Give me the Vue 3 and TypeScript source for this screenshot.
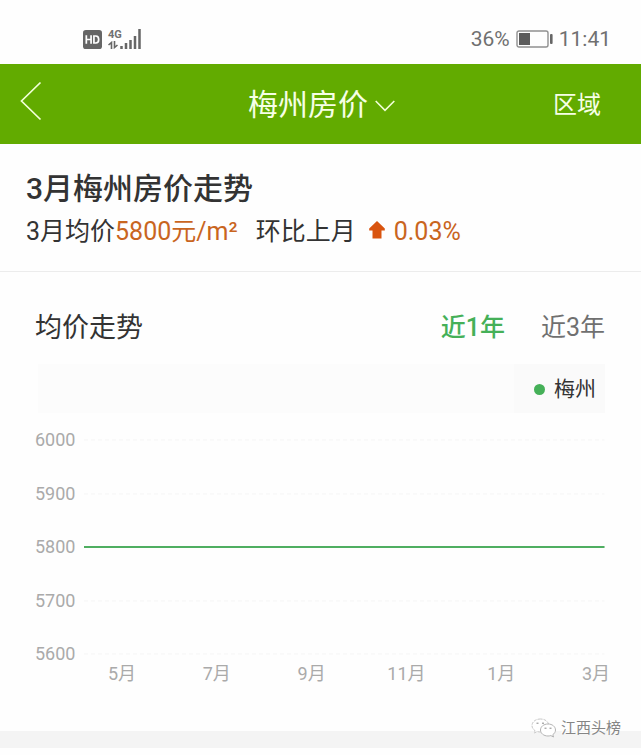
<script setup lang="ts">
import { computed, ref } from 'vue'

interface Range {
  id: number
  label: string
}

const ranges: Range[] = [
  { id: 1, label: '近1年' },
  { id: 3, label: '近3年' },
]
const activeRange = ref<number>(1)

const ticks: number[] = [6000, 5900, 5800, 5700, 5600]
const months: string[] = ['5月', '7月', '9月', '11月', '1月', '3月']
const prices: number[] = Array.from({ length: 12 }, () => 5800)

const plotWidth = 522
const plotHeight = 214

const toY = (value: number): number => {
  const top = ticks[0]
  const bottom = ticks[ticks.length - 1]
  return Math.round(((top - value) / (top - bottom)) * plotHeight)
}

const linePoints = computed<string>(() =>
  prices
    .map((p, i) => `${(i * plotWidth) / (prices.length - 1)},${toY(p)}`)
    .join(' '),
)
</script>

<template>
  <div class="page">
    <div class="status">
      <div class="network-side">
        <svg class="hd" viewBox="0 0 20 20" aria-hidden="true">
          <rect x="0" y="0" width="20" height="20" rx="3" fill="#666" />
          <path
            d="M3.5 5.5v9M8.5 5.5v9M3.5 10h5M11.5 6.3v7.4h2q3 0 3-3.7t-3-3.7z"
            fill="none" stroke="#fff" stroke-width="1.8"
          />
        </svg>
        <div class="network">
          <span class="net-type">4G</span>
          <svg class="updown" viewBox="0 0 10 8" aria-hidden="true">
            <path d="M3.5 8V1.500L0.500 4M6.500 0v6.500l3-2.500" fill="none" stroke="#666" stroke-width="1.600" />
          </svg>
        </div>
        <svg class="signal" viewBox="0 0 21 20" aria-hidden="true">
          <path
            d="M1.500 20v-3M6 20v-6M10.500 20v-9M15 20v-13M19.500 20V0"
            fill="none" stroke="#666" stroke-width="2.500"
          />
        </svg>
      </div>
      <div class="power-side">
        <span>36%</span>
        <svg class="battery" viewBox="0 0 37 18" aria-hidden="true">
          <rect x="1" y="1" width="31" height="16" rx="2" fill="none" stroke="#909090" stroke-width="1.4" />
          <rect x="3" y="3" width="11" height="12" fill="#5c5c5c" />
          <rect x="34" y="4" width="2.6" height="10" rx="1" fill="#666" />
        </svg>
        <span>11:41</span>
      </div>
    </div>

    <header class="nav">
      <button class="nav-back" type="button" aria-label="返回">
        <svg viewBox="0 0 22 40" aria-hidden="true">
          <path d="M20.5 1.5L1.5 20l19 18.5" fill="none" stroke="#f2ffd8" stroke-width="1.7" />
        </svg>
      </button>
      <button class="nav-city" type="button">
        <span>梅州房价</span>
        <svg viewBox="0 0 20 12" aria-hidden="true">
          <path d="M0.7 1l9.3 9.3L19.3 1" fill="none" stroke="#f2ffd8" stroke-width="1.6" />
        </svg>
      </button>
      <button class="nav-area" type="button">区域</button>
    </header>

    <section class="summary">
      <h1>3月梅州房价走势</h1>
      <p>
        <span>3月均价<span class="accent">5800元/m²</span></span>
        <span class="compare">环比上月</span>
        <svg class="rise" viewBox="0 0 16 18" aria-hidden="true">
          <path d="M8 0L15.800 7.500V9.500H12.500V17.500H3.500V9.500H0.200V7.500z" fill="#d9540f" />
        </svg>
        <span class="accent">0.03%</span>
      </p>
    </section>

    <section class="trend">
      <div class="trend-head">
        <h2>均价走势</h2>
        <div class="ranges">
          <button
            v-for="range in ranges"
            :key="range.id"
            type="button"
            :class="['range', { active: range.id === activeRange }]"
            :aria-pressed="range.id === activeRange"
            @click="activeRange = range.id"
          >{{ range.label }}</button>
        </div>
      </div>

      <div class="legend">
        <div class="legend-item"><i class="dot"></i>梅州</div>
      </div>

      <div class="chart">
        <div class="y-axis">
          <span v-for="tick in ticks" :key="tick">{{ tick }}</span>
        </div>
        <svg class="plot" :viewBox="`0 0 ${plotWidth} ${plotHeight}`" preserveAspectRatio="none" aria-hidden="true">
          <line
            v-for="tick in ticks"
            :key="tick"
            class="grid-line"
            x1="0" :x2="plotWidth" :y1="toY(tick)" :y2="toY(tick)"
          />
          <polyline class="price-line" :points="linePoints" />
        </svg>
      </div>
      <div class="x-axis">
        <span v-for="month in months" :key="month">{{ month }}</span>
      </div>
    </section>

    <div class="divider"></div>

    <div class="watermark">
      <svg viewBox="0 0 26 20" aria-hidden="true">
        <path
          d="M9.500 1C4.500 1 1 4 1 7.500c0 2.200 1.200 3.900 3 5.100L3.300 15l2.900-1.500c1 .3 2.200.5 3.300.5M17.500 6C16.500 3 13.500 1 9.500 1"
          fill="#fff" stroke="#b8b8b8" stroke-width="0.800" stroke-dasharray="3 1"
        />
        <path
          d="M17 6c-4.300 0-7.500 2.700-7.500 6s3.200 6 7.500 6c1 0 2-.2 2.900-.4l2.600 1.400-.7-2.300c1.600-1.100 2.700-2.800 2.700-4.700 0-3.300-3.200-6-7.500-6z"
          fill="#fff" stroke="#aaa" stroke-width="0.900"
        />
        <path d="M5.500 5.200h2M11 5.200h2M13.500 10.200h2M18.500 10.200h2" stroke="#888" stroke-width="1" />
      </svg>
      <span>江西头榜</span>
    </div>
  </div>
</template>

<style>
body {
  margin: 0;
  background: #fefefe;
}
</style>

<style scoped>
.page {
  position: relative;
  font-family: Roboto, "Noto Sans CJK SC", sans-serif;
  color: #333;
  background: #fefefe;
}
button {
  margin: 0;
  padding: 0;
  border: 0;
  background: none;
  font: inherit;
  color: inherit;
  cursor: pointer;
}
svg {
  display: block;
  flex: none;
}
h1,
h2,
p {
  margin: 0;
}
.status {
  display: flex;
  justify-content: space-between;
  align-items: center;
  height: 64px;
  padding: 14px 30px 0 83px;
  box-sizing: border-box;
  font-size: 21px;
  line-height: 26px;
  color: #707070;
}
.network-side,
.power-side {
  display: flex;
  align-items: center;
  gap: 6px;
}
.hd {
  width: 19px;
  height: 19px;
}
.network {
  display: flex;
  flex-direction: column;
  align-items: flex-start;
  gap: 1px;
}
.net-type {
  font-size: 11px;
  line-height: 11px;
  font-weight: 700;
}
.updown {
  width: 10px;
  height: 8px;
}
.signal {
  width: 21px;
  height: 20px;
  margin-left: -8px;
}
.battery {
  width: 37px;
  height: 18px;
}
.nav {
  display: grid;
  grid-template-columns: 1fr auto 1fr;
  align-items: center;
  height: 80px;
  padding: 0 40px 0 20px;
  box-sizing: border-box;
  background: #62ab00;
  color: #f6ffe6;
}
.nav-back {
  justify-self: start;
  padding-bottom: 6px;
}
.nav-back svg {
  width: 22px;
  height: 40px;
}
.nav-city {
  display: flex;
  align-items: center;
  gap: 7px;
  margin-left: 22px;
  padding-top: 2px;
  font-size: 30px;
  line-height: 40px;
}
.nav-city svg {
  width: 20px;
  height: 12px;
  margin-top: 2px;
}
.nav-area {
  justify-self: end;
  padding-top: 2px;
  font-size: 24px;
  line-height: 40px;
}
.summary {
  padding: 25px 26px 19px;
  border-bottom: 1px solid #ececec;
}
.summary h1 {
  font-size: 30px;
  line-height: 40px;
  font-weight: 500;
}
.summary p {
  display: flex;
  align-items: center;
  margin-top: 3px;
  font-size: 25px;
  line-height: 40px;
}
.accent {
  color: #c9651f;
}
.compare {
  margin-left: 18px;
}
.rise {
  width: 16px;
  height: 18px;
  margin: 0 9px 4px 13px;
}
.trend {
  padding: 36px 36px 47px 35px;
}
.trend-head {
  display: flex;
  align-items: center;
  justify-content: space-between;
}
.trend h2 {
  font-size: 27px;
  line-height: 40px;
  font-weight: 400;
}
.ranges {
  display: flex;
  gap: 36px;
}
.range {
  font-size: 25px;
  line-height: 40px;
  color: #707070;
}
.range.active {
  color: #45b058;
  font-weight: 500;
}
.legend {
  display: flex;
  justify-content: flex-end;
  margin: 16px 0 17px 3px;
  background: #fcfcfc;
}
.legend-item {
  display: flex;
  align-items: center;
  gap: 9px;
  padding: 2px 9px 0 20px;
  background: #fafafa;
  font-size: 21px;
  line-height: 47px;
}
.dot {
  width: 11px;
  height: 11px;
  border-radius: 50%;
  background: #45b058;
}
.chart {
  display: flex;
  gap: 9px;
}
.y-axis {
  display: flex;
  flex-direction: column;
  justify-content: space-between;
  height: 234px;
  font-size: 18px;
  line-height: 20px;
  color: #aaa;
}
.plot {
  flex: 1;
  min-width: 0;
  height: 214px;
  margin-top: 10px;
  overflow: visible;
}
.grid-line {
  stroke: #f5f5f5;
  stroke-width: 1;
  stroke-dasharray: 4 3;
  vector-effect: non-scaling-stroke;
}
.price-line {
  fill: none;
  stroke: #4fae61;
  stroke-width: 2;
  vector-effect: non-scaling-stroke;
}
.x-axis {
  display: flex;
  justify-content: space-between;
  margin: 0 -11px 0 67px;
  font-size: 18px;
  line-height: 20px;
  color: #aaa;
}
.x-axis span {
  width: 40px;
  text-align: center;
}
.divider {
  height: 17px;
  background: #f4f4f4;
}
.watermark {
  position: absolute;
  right: 20px;
  bottom: 8px;
  display: flex;
  align-items: center;
  gap: 4px;
  font-size: 15px;
  line-height: 24px;
  color: #858585;
  text-shadow: -1px -1px 0 #fff;
}
.watermark svg {
  width: 26px;
  height: 20px;
}
</style>
